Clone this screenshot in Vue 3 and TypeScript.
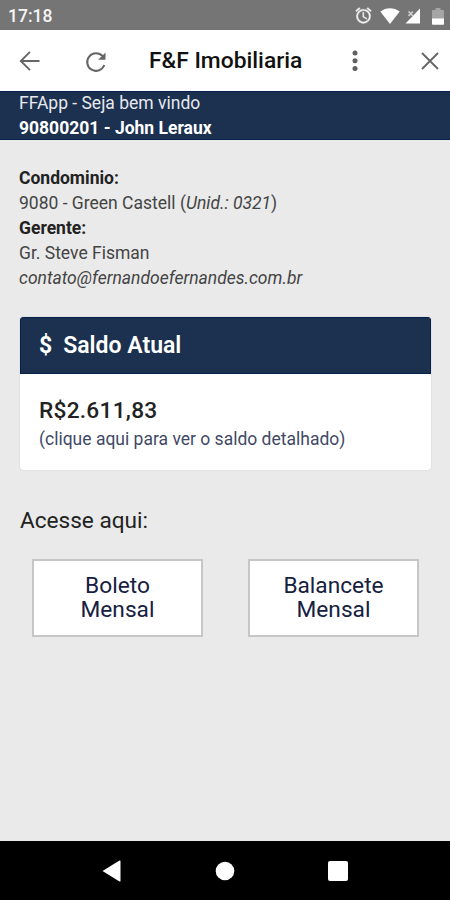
<script setup lang="ts">
import { ref } from 'vue'

interface Shortcut {
  id: string
  lines: string[]
}

const shortcuts = ref<Shortcut[]>([
  { id: 'boleto', lines: ['Boleto', 'Mensal'] },
  { id: 'balancete', lines: ['Balancete', 'Mensal'] },
])
</script>

<template>
  <div class="screen">
    <div class="status">
      <span class="clock">17:18</span>
      <div class="status-icons">
        <svg class="alarm" width="19" height="19" viewBox="0 0 24 24" fill="#f0f0f0" stroke="#f0f0f0" stroke-width="0.400">
          <path d="M22 5.720l-4.600-3.860-1.290 1.530 4.600 3.860L22 5.720zM7.880 3.390L6.600 1.860 2 5.710l1.290 1.530 4.590-3.850zM12.500 8H11v6l4.750 2.850.75-1.230-4-2.370V8zM12 4c-4.970 0-9 4.030-9 9s4.020 9 9 9a9 9 0 0 0 0-18zm0 16c-3.870 0-7-3.130-7-7s3.130-7 7-7 7 3.130 7 7-3.130 7-7 7z" />
        </svg>
        <svg class="wifi" width="20" height="16" viewBox="0 0 20 16" fill="#fff">
          <path d="M10 16L.3 3.600C3.200 1.300 6.500.2 10 .2s6.800 1.100 9.700 3.400z" />
        </svg>
        <svg class="signal" width="16" height="16" viewBox="0 0 16 16">
          <path d="M15 .5V15.500H.5z" fill="#fff" />
          <path d="M1.800 1.800h6.300v6.300h-6.300z" fill="#757575" />
          <path d="M3.500 3.500l4.500 4.500M8 3.500L3.500 8" stroke="#d0d0d0" stroke-width="1.700" />
        </svg>
        <svg class="battery" width="12" height="17" viewBox="0 0 12 17">
          <path d="M3.500 0h5v2H11q1 0 1 1v8H0V3q0-1 1-1h2.500z" fill="#a5a5a5" />
          <path d="M0 10.500h12V16q0 .8-.8.8H.8Q0 16.800 0 16z" fill="#fff" />
        </svg>
      </div>
    </div>

    <header class="toolbar">
      <svg class="back" width="22" height="22" viewBox="0 0 22 22" fill="none" stroke="#666" stroke-width="1.900">
        <path d="M20.500 11H2M11 1.800L1.800 11l9.200 9.200" />
      </svg>
      <svg class="reload" width="22" height="22" viewBox="0 0 22 22" fill="none" stroke="#666" stroke-width="2">
        <path d="M17.600 5.200A8.800 8.800 0 1 0 19.300 14" />
        <path d="M20.500 1.500v7.300h-7.300z" fill="#666" stroke="none" />
      </svg>
      <h1 class="title">F&amp;F Imobiliaria</h1>
      <svg class="more" width="6" height="22" viewBox="0 0 6 22" fill="#606060">
        <circle cx="3" cy="3" r="2.500" /><circle cx="3" cy="10.700" r="2.500" /><circle cx="3" cy="18.400" r="2.500" />
      </svg>
      <svg class="close" width="18" height="18" viewBox="0 0 18 18" fill="none" stroke="#666" stroke-width="1.900">
        <path d="M1 1l16 16M17 1L1 17" />
      </svg>
    </header>

    <section class="banner">
      <div class="hello">FFApp - Seja bem vindo</div>
      <b class="user">90800201 - John Leraux</b>
    </section>

    <main class="content">
      <section class="info">
        <div><b>Condominio:</b></div>
        <div>9080 - Green Castell (<i>Unid.: 0321</i>)</div>
        <div><b>Gerente:</b></div>
        <div>Gr. Steve Fisman</div>
        <div><i>contato@fernandoefernandes.com.br</i></div>
      </section>

      <section class="card">
        <div class="card-head"><span class="dollar">$</span><span class="card-title">Saldo Atual</span></div>
        <div class="card-body">
          <div class="amount">R$2.611,83</div>
          <div class="hint">(clique aqui para ver o saldo detalhado)</div>
        </div>
      </section>

      <h2 class="access">Acesse aqui:</h2>
      <div class="shortcuts">
        <button v-for="item in shortcuts" :key="item.id" class="shortcut" type="button">
          <span v-for="line in item.lines" :key="line">{{ line }}</span>
        </button>
      </div>
    </main>

    <nav class="navbar">
      <svg width="19" height="22" viewBox="0 0 19 22" fill="#fff"><path d="M.5 11L17.500.5q1-.4 1 .6v19.800q0 1-1 .6z" /></svg>
      <svg width="20" height="20" viewBox="0 0 20 20" fill="#fff"><circle cx="10" cy="10" r="9.300" /></svg>
      <svg width="20" height="20" viewBox="0 0 20 20" fill="#fff"><rect width="20" height="20" rx="2" /></svg>
    </nav>
  </div>
</template>

<style>
body {
  margin: 0;
}
</style>

<style scoped>
.screen {
  width: 450px;
  height: 900px;
  display: flex;
  flex-direction: column;
  overflow: hidden;
  background: #eaeaea;
  color: #222;
  font-family: Roboto, "Liberation Sans", sans-serif;
}
svg {
  display: block;
  flex: none;
}
.status {
  height: 30px;
  box-sizing: border-box;
  padding: 2px 6px 0 8px;
  display: flex;
  align-items: center;
  justify-content: space-between;
  background: #757575;
  color: #f5f5f5;
}
.clock {
  font-size: 17.500px;
  font-weight: 500;
}
.status-icons {
  display: flex;
  align-items: center;
}
.alarm {
  margin-top: -1px;
}
.wifi {
  margin-left: 7px;
}
.signal {
  margin-left: 5px;
}
.battery {
  margin-left: 11px;
}
.toolbar {
  height: 61px;
  box-sizing: border-box;
  padding: 0 11px 0 18.500px;
  display: flex;
  align-items: center;
  background: #fff;
}
.reload {
  margin: 3px 0 0 44.500px;
}
.title {
  margin: 0 0 0 42px;
  width: 160px;
  font-size: 22.800px;
  line-height: 28px;
  font-weight: 500;
  color: #111;
  white-space: nowrap;
}
.more {
  margin-left: 43px;
}
.close {
  margin-left: auto;
}
.banner {
  height: 49px;
  box-sizing: border-box;
  padding: 0 19px;
  background: #1c304f;
  box-shadow: inset 0 1px #06204c, inset 0 -1px #06204c;
  color: #e6e9ee;
  font-size: 17.500px;
  line-height: 25px;
}
.user {
  color: #fff;
}
.content {
  flex: 1;
  padding: 26px 19px 0 20px;
}
.info {
  margin-left: -1px;
  font-size: 17.500px;
  line-height: 25px;
  color: #444;
}
.info b {
  color: #222;
}
.card {
  margin-top: 26px;
  height: 153px;
  border-radius: 4px;
  background: #fff;
  box-shadow: 0 0 2px #ccc;
  overflow: hidden;
}
.card-head {
  height: 57px;
  padding-left: 19px;
  display: flex;
  align-items: center;
  background: #1c304f;
  box-shadow: inset 0 0 0 1px #06204c;
  color: #fff;
  font-size: 23px;
  font-weight: 500;
}
.dollar {
  font-weight: 700;
}
.card-title {
  margin-left: 11px;
  font-weight: 600;
}
.card-body {
  padding: 23px 19px;
}
.amount {
  font-size: 22.700px;
  line-height: 28px;
  font-weight: 500;
  letter-spacing: 0.250px;
}
.hint {
  margin-top: 2px;
  font-size: 17.500px;
  line-height: 24px;
  color: #3f4966;
}
.access {
  margin: 36px 0 0;
  font-size: 22.600px;
  line-height: 30px;
  font-weight: 400;
  color: #222;
}
.shortcuts {
  margin: 23px 12px 0;
  display: flex;
  justify-content: space-between;
}
.shortcut {
  width: 171px;
  height: 78px;
  box-sizing: border-box;
  padding: 0;
  border: 2px solid #c6c6c6;
  background: #fff;
  display: flex;
  flex-direction: column;
  align-items: center;
  justify-content: center;
  font-family: inherit;
  font-size: 22.700px;
  line-height: 24.500px;
  color: #16203f;
}
.navbar {
  height: 59px;
  box-sizing: border-box;
  padding: 0 102px;
  display: flex;
  align-items: center;
  justify-content: space-between;
  background: #000;
}
</style>
